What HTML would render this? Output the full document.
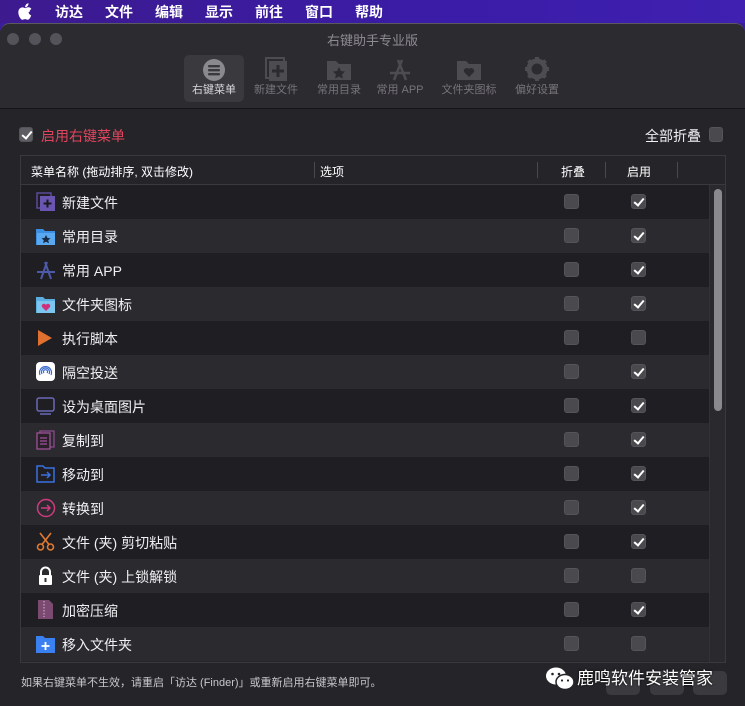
<!DOCTYPE html>
<html><head><meta charset="utf-8"><style>
*{box-sizing:border-box;margin:0;padding:0}
body{width:745px;height:706px;overflow:hidden;background:#3b1d9c;font-family:"Liberation Sans","Noto Sans CJK SC",sans-serif;color:#e8e8ea;position:relative}
.menubar{position:absolute;left:0;top:0;width:745px;height:23px;background:linear-gradient(90deg,#3d1a8e,#3a1ca8 60%,#3f20b0);display:flex;align-items:center;font-size:14px;color:#fff;font-weight:bold}
.menubar span{margin-right:22px}
.win{position:absolute;left:0;top:23px;width:745px;height:683px;background:#252429;border-top-left-radius:10px;border-top-right-radius:10px;overflow:hidden;border-top:1px solid #5a5860}
.tb{position:absolute;left:0;top:0;width:745px;height:85px;background:#2c2b30;border-bottom:1px solid #141316}
.dot{position:absolute;top:9px;width:12px;height:12px;border-radius:50%;background:#55535a}
.title{position:absolute;top:6px;left:0;width:745px;text-align:center;font-size:13px;color:#8d8b91}
.tab{position:absolute;top:31px;height:47px;text-align:center;font-size:11px;color:#76747a}
.tab .lb{position:absolute;bottom:5px;left:0;right:0;white-space:nowrap}
.sel{background:#3a393e;border-radius:5px;color:#d8d8da}
.cb{position:absolute;width:15px;height:15px;border-radius:3px;background:#4a494e;border:1px solid #55545a}
.cb.on::after{content:"";position:absolute;left:4px;top:1px;width:4px;height:8px;border:solid #fff;border-width:0 2px 2px 0;transform:rotate(40deg)}
.table{position:absolute;left:20px;top:131px;width:706px;height:508px;background:#252429;border:1px solid #3a393e;overflow:hidden}
.hdr{position:absolute;left:0;top:0;width:706px;height:29px;font-size:12px;color:#fff;border-bottom:1px solid #3a393e}
.hdr span{position:absolute;top:7px}
.hdr i{position:absolute;top:6px;width:1px;height:16px;background:#4a494e}
.row{position:absolute;left:0;width:690px;height:34px;font-size:14px;color:#f0f0f2}
.row .t{position:absolute;left:41px;top:8px}
.row svg{position:absolute;left:15px;top:7px}
.row .cb{top:9px}
.scroll{position:absolute;left:688px;top:29px;width:17px;height:478px;background:#2a292e;border-left:1px solid #333237}
.thumb{position:absolute;left:4px;top:4px;width:8px;height:222px;border-radius:4px;background:#8a898e}
</style></head><body>
<div class="menubar"><svg style="margin-left:18px;margin-right:23px" width="14" height="17" viewBox="0 0 14 17"><path d="M11.6 9c0-2 1.7-3 1.8-3.1-1-1.4-2.5-1.6-3-1.6-1.3-.1-2.5.8-3.1.8-.7 0-1.700-.8-2.800-.7C3 4.400 1.700 5.200 1 6.500-.4 9 .6 12.700 2 14.700c.7 1 1.500 2.100 2.500 2 1-.1 1.400-.6 2.600-.6s1.500.6 2.600.6c1.100 0 1.800-1 2.400-2 .8-1.100 1.100-2.200 1.100-2.300 0 0-2.600-.9-2.600-3.400zM9.600 3c.6-.7 1-1.700.9-2.700-.8 0-1.900.6-2.500 1.300-.5.600-1 1.600-.9 2.600.9.100 1.900-.5 2.500-1.200z" fill="#fff"/></svg><span>访达</span><span>文件</span><span>编辑</span><span>显示</span><span>前往</span><span>窗口</span><span>帮助</span></div>
<div class="win">
<div class="tb">
<div class="dot" style="left:7px"></div><div class="dot" style="left:29px"></div><div class="dot" style="left:50px"></div>
<div class="title">右键助手专业版</div>
<div class="tab sel" style="left:184px;width:60px"><svg width="24" height="24" style="margin-top:3px" viewBox="0 0 24 24"><circle cx="12" cy="12" r="11" fill="#8a898e"/><rect x="6" y="7" width="12" height="2.4" rx="1" fill="#3a393e"/><rect x="6" y="11" width="12" height="2.4" rx="1" fill="#3a393e"/><rect x="6" y="15" width="12" height="2.4" rx="1" fill="#3a393e"/></svg><div class="lb">右键菜单</div></div>
<div class="tab" style="left:248px;width:56px"><svg width="26" height="26" style="margin-top:1px" viewBox="0 0 26 26"><rect x="3" y="2" width="18" height="20" fill="none" stroke="#4d4c51" stroke-width="2"/><rect x="6" y="5" width="18" height="20" fill="#4d4c51"/><path d="M15 9v12M9 15h12" stroke="#2c2b30" stroke-width="3"/></svg><div class="lb">新建文件</div></div>
<div class="tab" style="left:310px;width:58px"><svg width="28" height="24" style="margin-top:3px" viewBox="0 0 28 24"><path d="M2 3h9l3 3h12v16H2z" fill="#4d4c51"/><path d="M14 9l2 4 4 .5-3 3 1 4-4-2-4 2 1-4-3-3 4-.5z" fill="#2c2b30"/></svg><div class="lb">常用目录</div></div>
<div class="tab" style="left:372px;width:56px"><svg width="28" height="24" style="margin-top:3px" viewBox="0 0 28 24"><path d="M8 22L16 2M20 22L12 2M4 15h20" stroke="#4d4c51" stroke-width="2.5"/></svg><div class="lb">常用 APP</div></div>
<div class="tab" style="left:436px;width:66px"><svg width="28" height="24" style="margin-top:3px" viewBox="0 0 28 24"><path d="M2 3h9l3 3h12v16H2z" fill="#4d4c51"/><path d="M14 19l-5-5a3 3 0 015-3 3 3 0 015 3z" fill="#2c2b30"/></svg><div class="lb">文件夹图标</div></div>
<div class="tab" style="left:508px;width:58px"><svg width="26" height="26" style="margin-top:1px" viewBox="0 0 26 26"><circle cx="13" cy="13" r="8" fill="none" stroke="#4d4c51" stroke-width="5"/><g stroke="#4d4c51" stroke-width="4"><path d="M13 1v5M13 20v5M1 13h5M20 13h5M4.5 4.5l3.5 3.5M18 18l3.5 3.5M4.5 21.5L8 18M18 8l3.5-3.5"/></g></svg><div class="lb">偏好设置</div></div>
</div>
<div class="cb on" style="left:19px;top:103px;width:14px;height:15px;background:#5e5d63"></div>
<div style="position:absolute;left:41px;top:102px;font-size:14px;color:#e0455d">启用右键菜单</div>
<div style="position:absolute;left:645px;top:102px;font-size:14px;color:#f0f0f2">全部折叠</div>
<div class="cb" style="left:709px;top:103px;width:14px;height:15px"></div>
<div class="table">
<div class="hdr"><span style="left:10px">菜单名称 (拖动排序, 双击修改)</span><i style="left:293px"></i><span style="left:299px">选项</span><i style="left:516px"></i><span style="left:540px">折叠</span><i style="left:584px"></i><span style="left:606px">启用</span><i style="left:656px"></i></div>
<div id="rows"></div>
<div class="scroll"><div class="thumb"></div></div>
</div>
<div style="position:absolute;left:21px;top:650px;font-size:11px;color:#c8c8ca">如果右键菜单不生效，请重启「访达 (Finder)」或重新启用右键菜单即可。</div>
<div style="position:absolute;left:606px;top:647px;width:34px;height:24px;border-radius:5px;background:#3b3a3f"></div>
<div style="position:absolute;left:650px;top:647px;width:34px;height:24px;border-radius:5px;background:#3b3a3f"></div>
<div style="position:absolute;left:693px;top:647px;width:34px;height:24px;border-radius:5px;background:#3b3a3f"></div>
<svg style="position:absolute;left:545px;top:642px" width="30" height="26" viewBox="0 0 30 26"><ellipse cx="11" cy="10" rx="10" ry="8.5" fill="#fff"/><ellipse cx="20" cy="16" rx="9" ry="7.5" fill="#fff" stroke="#252429" stroke-width="1.5"/><circle cx="7.5" cy="8" r="1.3" fill="#252429"/><circle cx="14" cy="8" r="1.3" fill="#252429"/><circle cx="17" cy="14.5" r="1.1" fill="#252429"/><circle cx="23" cy="14.5" r="1.1" fill="#252429"/></svg>
<div style="position:absolute;left:577px;top:640px;font-size:17px;color:#fff;text-shadow:0 0 2px #000">鹿鸣软件安装管家</div>
</div>
<script>
const items=[
["新建文件",1,'<rect x="1" y="1" width="14" height="15" fill="none" stroke="#5b4a9a" stroke-width="1.5"/><rect x="4" y="4" width="15" height="15" fill="#6a55b0"/><path d="M11.5 7.5v8M7.5 11.5h8" stroke="#1a1a1e" stroke-width="2"/>'],
["常用目录",1,'<path d="M0 3h7l2 2h10v14H0z" fill="#3b8ee0"/><path d="M1 7h18v12H1z" fill="#5aa8f0"/><path d="M10 9l1.5 3 3 .3-2.3 2 .8 3-3-1.6-3 1.6.8-3-2.3-2 3-.3z" fill="#1a2a40"/>'],
["常用APP",1,'<path d="M5 19L11 2M15 19L9 2M1 12h18" stroke="#4c5aa8" stroke-width="2"/>'],
["文件夹图标",1,'<path d="M0 3h7l2 2h10v14H0z" fill="#5aaee0"/><path d="M1 7h18v12H1z" fill="#7cc6f0"/><path d="M10 17l-4-4a2.2 2.2 0 014-2 2.2 2.2 0 014 2z" fill="#d0307a"/>'],
["执行脚本",0,'<path d="M2 2l14 8-14 8z" fill="#e07030"/>'],
["隔空投送",1,'<rect x="0" y="0" width="19" height="19" rx="4" fill="#fff"/><g fill="none" stroke="#3a6ad0" stroke-width="1.2"><path d="M4 13a6 6 0 1111 0"/><path d="M6 12a4 4 0 117 0"/><path d="M8 11a2 2 0 113 0"/></g>'],
["设为桌面图片",1,'<rect x="1" y="2" width="17" height="13" rx="2" fill="none" stroke="#6a68b8" stroke-width="1.5"/><path d="M4 18h11" stroke="#6a68b8" stroke-width="1.5"/>'],
["复制到",1,'<rect x="4" y="1" width="14" height="16" fill="none" stroke="#8a4a8a" stroke-width="1.3"/><rect x="1" y="3" width="13" height="16" fill="#2a2028" stroke="#a0509a" stroke-width="1.3"/><path d="M4 8h7M4 11h7M4 14h7" stroke="#a0509a" stroke-width="1.3"/>'],
["移动到",1,'<path d="M1 2h6l2 2h9v14H1z" fill="none" stroke="#3a70e0" stroke-width="1.5"/><path d="M5 11h9M11 8l3 3-3 3" stroke="#3a70e0" stroke-width="1.5" fill="none"/>'],
["转换到",1,'<circle cx="10" cy="10" r="8.5" fill="none" stroke="#d03a80" stroke-width="1.5"/><path d="M5 10h9M11 7l3 3-3 3" stroke="#d03a80" stroke-width="1.5" fill="none"/>'],
["文件 (夹) 剪切粘贴",1,'<circle cx="4.5" cy="15" r="3" fill="none" stroke="#e07a30" stroke-width="1.6"/><circle cx="14.5" cy="15" r="3" fill="none" stroke="#e07a30" stroke-width="1.6"/><path d="M6 12.5L15 1M13 12.5L4 1" stroke="#e07a30" stroke-width="1.6"/>'],
["文件 (夹) 上锁解锁",0,'<path d="M5 9V6a4.5 4.5 0 019 0v3" fill="none" stroke="#fff" stroke-width="2"/><rect x="3" y="9" width="13" height="10" rx="1" fill="#fff"/><rect x="8.5" y="12" width="2" height="4" fill="#333"/>'],
["加密压缩",1,'<path d="M2 0h11l4 4v15H2z" fill="#7a4a70"/><path d="M8 1v16" stroke="#c090b8" stroke-width="1.5" stroke-dasharray="1.5 1.5"/>'],
["移入文件夹",0,'<path d="M0 2h7l2 2h10v15H0z" fill="#3a80f0"/><path d="M9.5 8v8M5.5 12h8" stroke="#fff" stroke-width="1.8"/>']];
let h="";items.forEach((it,i)=>{const y=29+i*34;h+=`<div class="row" style="top:${y}px;background:${i%2?'#2b2a2f':'#1f1e23'}"><svg width="20" height="20" viewBox="0 0 20 20">${it[2]}</svg><span class="t">${it[0].replace('APP',' APP')}</span><div class="cb" style="left:543px"></div><div class="cb${it[1]?' on':''}" style="left:610px"></div></div>`});
document.getElementById('rows').innerHTML=h;
</script>
</body></html>
